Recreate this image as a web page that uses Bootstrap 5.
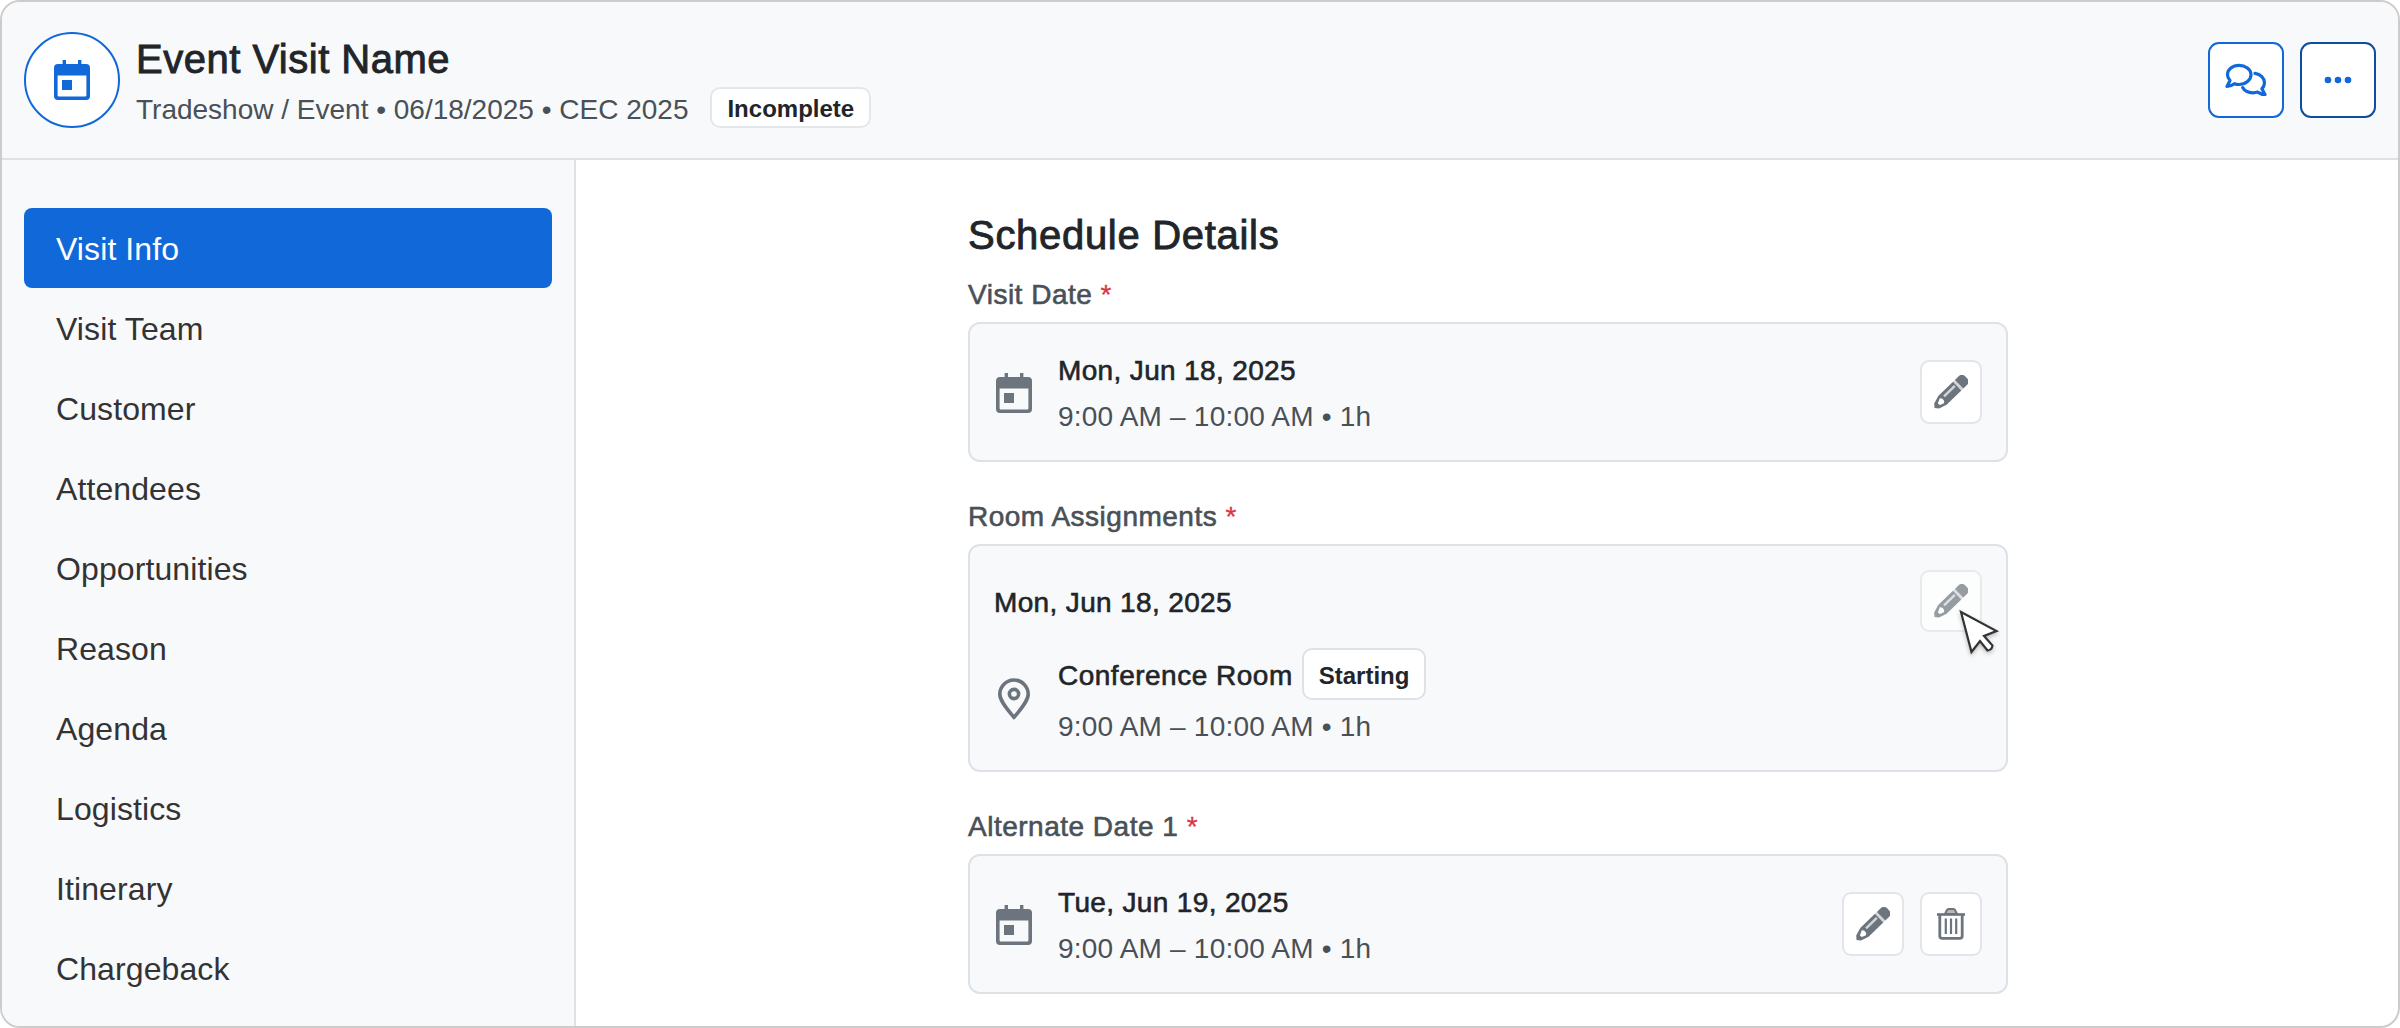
<!DOCTYPE html>
<html lang="en">
<head>
    <meta charset="UTF-8">
    <meta name="viewport" content="width=device-width, initial-scale=1.0">
    <title>Event Visit Name</title>
    <!-- Bootstrap CSS -->
    <link href="https://cdn.jsdelivr.net/npm/bootstrap@5.3.0/dist/css/bootstrap.min.css" rel="stylesheet">
    <style>
        body {
            font-family: "Liberation Sans", Arial, sans-serif;
            font-size: 28px;
            line-height: 42px;
            color: #212529;
            background: #fff;
        }
        svg { display: block; flex-shrink: 0; }

        .app-frame { border: 2px solid #ccc; border-radius: 20px; }
        .app-header {
            height: 158px;
            padding: 0 22px;
            background: #f8f9fb;
            border-bottom: 2px solid #dee2e6;
        }
        .visit-avatar { width: 96px; height: 96px; border: 2px solid #1068d9; color: #1068d9; }
        .visit-heading { margin-left: 16px; padding-top: 3px; }
        .page-title, .section-title { font-size: 40px; line-height: 48px; font-weight: 400; -webkit-text-stroke: .9px; letter-spacing: .5px; }
        .page-title { padding-top: 2px; margin-bottom: 2px; }
        .section-title { letter-spacing: .7px; margin-bottom: 14px; }
        .medium-text { -webkit-text-stroke: .6px; letter-spacing: .35px; }
        .muted-text { color: #495057; }
        .time-text { letter-spacing: .2px; }
        .status-pill {
            font-size: 24px;
            line-height: 34px;
            font-weight: 700;
            padding: 3px 15px 0;
            margin-left: 22px;
            background: #fff;
            border: 2px solid #e4e7ea;
            border-radius: 10px;
        }
        .status-pill-lg { line-height: 45px; margin-left: 9px; border-color: #dee2e6; }
        .header-btn {
            width: 76px;
            height: 76px;
            padding: 0;
            background: #fff;
            border: 2px solid #1068d9;
            border-radius: 11px;
            color: #1068d9;
        }
        .header-btn-focus { border-color: #0d4ea3; }

        .side-nav { width: 574px; padding: 48px 22px 0; background: #f8f9fb; border-right: 2px solid #dee2e6; }
        .side-nav .nav-link {
            height: 80px;
            padding: 0 32px;
            font-size: 32px;
            line-height: 83px;
            letter-spacing: .1px;
            color: #333;
            border-radius: 8px;
        }
        .side-nav .nav-link.active { background: #1068d9; color: #fff; }

        .details-col { width: 1040px; margin-left: 392px; padding-top: 51px; }
        .field-label { padding-top: 1px; margin-bottom: 6px; color: #495057; letter-spacing: .5px; }
        .field-label span { color: #dc3545; -webkit-text-stroke: .3px; }
        .detail-box {
            background: #f8f9fb;
            border: 2px solid #dee2e6;
            border-radius: 12px;
            padding: 0 24px;
            margin-bottom: 33px;
            color: #6c757d;
        }
        .date-box { height: 140px; }
        .date-box > svg { margin-top: 2px; }
        .room-box { height: 228px; padding-top: 24px; }
        .detail-lines { margin-left: 24px; padding-top: 3px; line-height: 46px; }
        .room-box .detail-lines { padding-top: 0; }
        .room-box .time-text { padding-top: 4px; }
        .detail-head { color: #212529; }
        .room-box .detail-head { padding-top: 3px; }
        .room-name { letter-spacing: .5px; }
        .icon-btn {
            width: 62px;
            height: 64px;
            padding: 0;
            background: #fff;
            border: 2px solid #e2e5e9;
            border-radius: 9px;
            color: #6c757d;
        }
        .icon-btn-hover { height: 62px; opacity: .7; }
        .pointer { position: absolute; left: 38px; top: 39px; filter: drop-shadow(0 2px 2px rgba(0, 0, 0, .25)); }
    </style>
</head>
<body>
    <!-- Shared icons -->
    <svg width="0" height="0" class="position-absolute" aria-hidden="true">
        <symbol id="icon-calendar" viewBox="2 0 20 22">
            <path fill="currentColor" fill-rule="evenodd" d="M7.3 1h1.7v2h6V1h1.7v2h2.3a2 2 0 0 1 2 2v14a2 2 0 0 1-2 2H5a2 2 0 0 1-2-2V5a2 2 0 0 1 2-2h2.3zM4.8 8.8v9.8q0 .6.6.6h13.2q.6 0 .6-.6V8.8zM7 11h5v5H7z"/>
        </symbol>
        <symbol id="icon-pencil" viewBox="0 0 34 34">
            <g transform="translate(.5 33) rotate(-44)">
                <path fill="currentColor" d="M0 0 3-3.500 11-6H31.500V6H11L3 3.500z"/>
                <path fill="#fff" d="M5.500-.8 10.500-3.300Q12.800-1.500 12 .8 12 2.300 10 3.200L6 1.500z"/>
                <path stroke="#d3d6d9" stroke-width="2.400" d="M15-1.800H30"/>
                <path fill="currentColor" fill-opacity=".3" d="M31.500-6h2.700V6h-2.700z"/>
                <path fill="currentColor" d="M34.200-6h4.800q5 0 5 4.500v3q0 4.500-5 4.500h-4.800z"/>
            </g>
        </symbol>
    </svg>

    <div class="app-frame d-flex flex-column vh-100 overflow-hidden">
        <header class="app-header d-flex align-items-center flex-shrink-0">
            <div class="visit-avatar rounded-circle bg-white d-flex justify-content-center align-items-center">
                <svg width="40" height="44"><use href="#icon-calendar"/></svg>
            </div>
            <div class="visit-heading">
                <h1 class="page-title">Event Visit Name</h1>
                <div class="d-flex align-items-center">
                    <span class="muted-text pt-1">Tradeshow / Event • 06/18/2025 • CEC 2025</span>
                    <span class="status-pill">Incomplete</span>
                </div>
            </div>
            <div class="d-flex gap-3 ms-auto">
                <button type="button" class="btn header-btn d-flex justify-content-center align-items-center" aria-label="Comments">
                    <svg width="42" height="34" viewBox="0 0 42 34" fill="none" stroke="currentColor" stroke-width="3.200" stroke-linejoin="round" stroke-linecap="round">
                        <path d="M2 23.500 5 17.500C3.400 15.600 2.500 13.700 2.500 11.700 2.500 6.500 7.600 2.400 14 2.400S26 6.500 26 11.700 20.600 21.500 14 21.500c-1.700 0-3.200-.2-4.600-.8C7 22.500 4.800 23.500 2 23.500z"/>
                        <path d="M30 10.300c5.600.8 9.500 4.700 9.500 9.500 0 2.300-.9 4.300-2.600 6L40 31.500c-2.800 0-5.200-.9-7.400-2.400-1.500.5-3 .7-4.600.7-4.600 0-8.600-2-10.300-5.200"/>
                    </svg>
                </button>
                <button type="button" class="btn header-btn header-btn-focus d-flex justify-content-center align-items-center" aria-label="More">
                    <svg width="28" height="8" viewBox="0 0 28 8" fill="currentColor">
                        <circle cx="4" cy="4" r="3.300"/><circle cx="14" cy="4" r="3.300"/><circle cx="24" cy="4" r="3.300"/>
                    </svg>
                </button>
            </div>
        </header>

        <div class="d-flex flex-grow-1">
            <nav class="side-nav nav nav-pills flex-column flex-nowrap flex-shrink-0">
                <a class="nav-link active" href="#">Visit Info</a>
                <a class="nav-link" href="#">Visit Team</a>
                <a class="nav-link" href="#">Customer</a>
                <a class="nav-link" href="#">Attendees</a>
                <a class="nav-link" href="#">Opportunities</a>
                <a class="nav-link" href="#">Reason</a>
                <a class="nav-link" href="#">Agenda</a>
                <a class="nav-link" href="#">Logistics</a>
                <a class="nav-link" href="#">Itinerary</a>
                <a class="nav-link" href="#">Chargeback</a>
            </nav>

            <main class="details-col">
                <h2 class="section-title">Schedule Details</h2>

                <div class="field-label medium-text">Visit Date <span>*</span></div>
                <div class="detail-box date-box d-flex align-items-center">
                    <svg width="40" height="44"><use href="#icon-calendar"/></svg>
                    <div class="detail-lines">
                        <div class="detail-head medium-text">Mon, Jun 18, 2025</div>
                        <div class="muted-text time-text">9:00 AM – 10:00 AM • 1h</div>
                    </div>
                    <button type="button" class="btn icon-btn ms-auto d-flex justify-content-center align-items-center" aria-label="Edit">
                        <svg width="34" height="34"><use href="#icon-pencil"/></svg>
                    </button>
                </div>

                <div class="field-label medium-text">Room Assignments <span>*</span></div>
                <div class="detail-box room-box">
                    <div class="d-flex align-items-center justify-content-between mb-3">
                        <div class="detail-head medium-text">Mon, Jun 18, 2025</div>
                        <div class="position-relative">
                            <button type="button" class="btn icon-btn icon-btn-hover d-flex justify-content-center align-items-center" aria-label="Edit">
                                <svg width="34" height="34"><use href="#icon-pencil"/></svg>
                            </button>
                            <svg class="pointer" width="42" height="46" viewBox="0 0 42 46">
                                <path fill="#fff" stroke="#333" stroke-width="2.200" stroke-linejoin="miter" d="M3 3 38.500 22 26 27 34.500 36.500Q34 41 29.500 41.500L22 32 13.500 43z"/>
                            </svg>
                        </div>
                    </div>
                    <div class="d-flex align-items-center">
                        <svg width="40" height="44" viewBox="0 0 40 44" fill="none" stroke="currentColor" stroke-width="3.600">
                            <path stroke-linejoin="round" d="M20 40.500C14 33 5.800 24 5.800 17.200a14.200 14.200 0 0 1 28.400 0C34.200 24 26 33 20 40.500z"/>
                            <circle cx="20" cy="17" r="4.600"/>
                        </svg>
                        <div class="detail-lines">
                            <div class="d-flex align-items-center">
                                <span class="detail-head medium-text room-name">Conference Room</span>
                                <span class="status-pill status-pill-lg detail-head">Starting</span>
                            </div>
                            <div class="muted-text time-text">9:00 AM – 10:00 AM • 1h</div>
                        </div>
                    </div>
                </div>

                <div class="field-label medium-text">Alternate Date 1 <span>*</span></div>
                <div class="detail-box date-box d-flex align-items-center">
                    <svg width="40" height="44"><use href="#icon-calendar"/></svg>
                    <div class="detail-lines">
                        <div class="detail-head medium-text">Tue, Jun 19, 2025</div>
                        <div class="muted-text time-text">9:00 AM – 10:00 AM • 1h</div>
                    </div>
                    <div class="d-flex gap-3 ms-auto">
                        <button type="button" class="btn icon-btn d-flex justify-content-center align-items-center" aria-label="Edit">
                            <svg width="34" height="34"><use href="#icon-pencil"/></svg>
                        </button>
                        <button type="button" class="btn icon-btn d-flex justify-content-center align-items-center" aria-label="Delete">
                            <svg width="28" height="32" viewBox="0 0 28 32" fill="none" stroke="currentColor">
                                <path stroke-width="2" fill="currentColor" fill-opacity=".5" d="M8 6 10 2q.5-1 1.500-1h5q1 0 1.500 1l2 4z"/>
                                <path stroke-width="2.600" d="M0 6.500h28"/>
                                <path stroke-width="2.800" d="M2.800 6.500V28q0 2.400 2.600 2.400h17.200q2.600 0 2.600-2.400V6.500"/>
                                <path stroke-width="2.200" d="M8.800 10.500v15.500M14 10.500v15.500M19.200 10.500v15.500"/>
                            </svg>
                        </button>
                    </div>
                </div>
            </main>
        </div>
    </div>
    <!-- Bootstrap JS Bundle with Popper -->
    <script src="https://cdn.jsdelivr.net/npm/bootstrap@5.3.0/dist/js/bootstrap.bundle.min.js"></script>
</body>
</html>
